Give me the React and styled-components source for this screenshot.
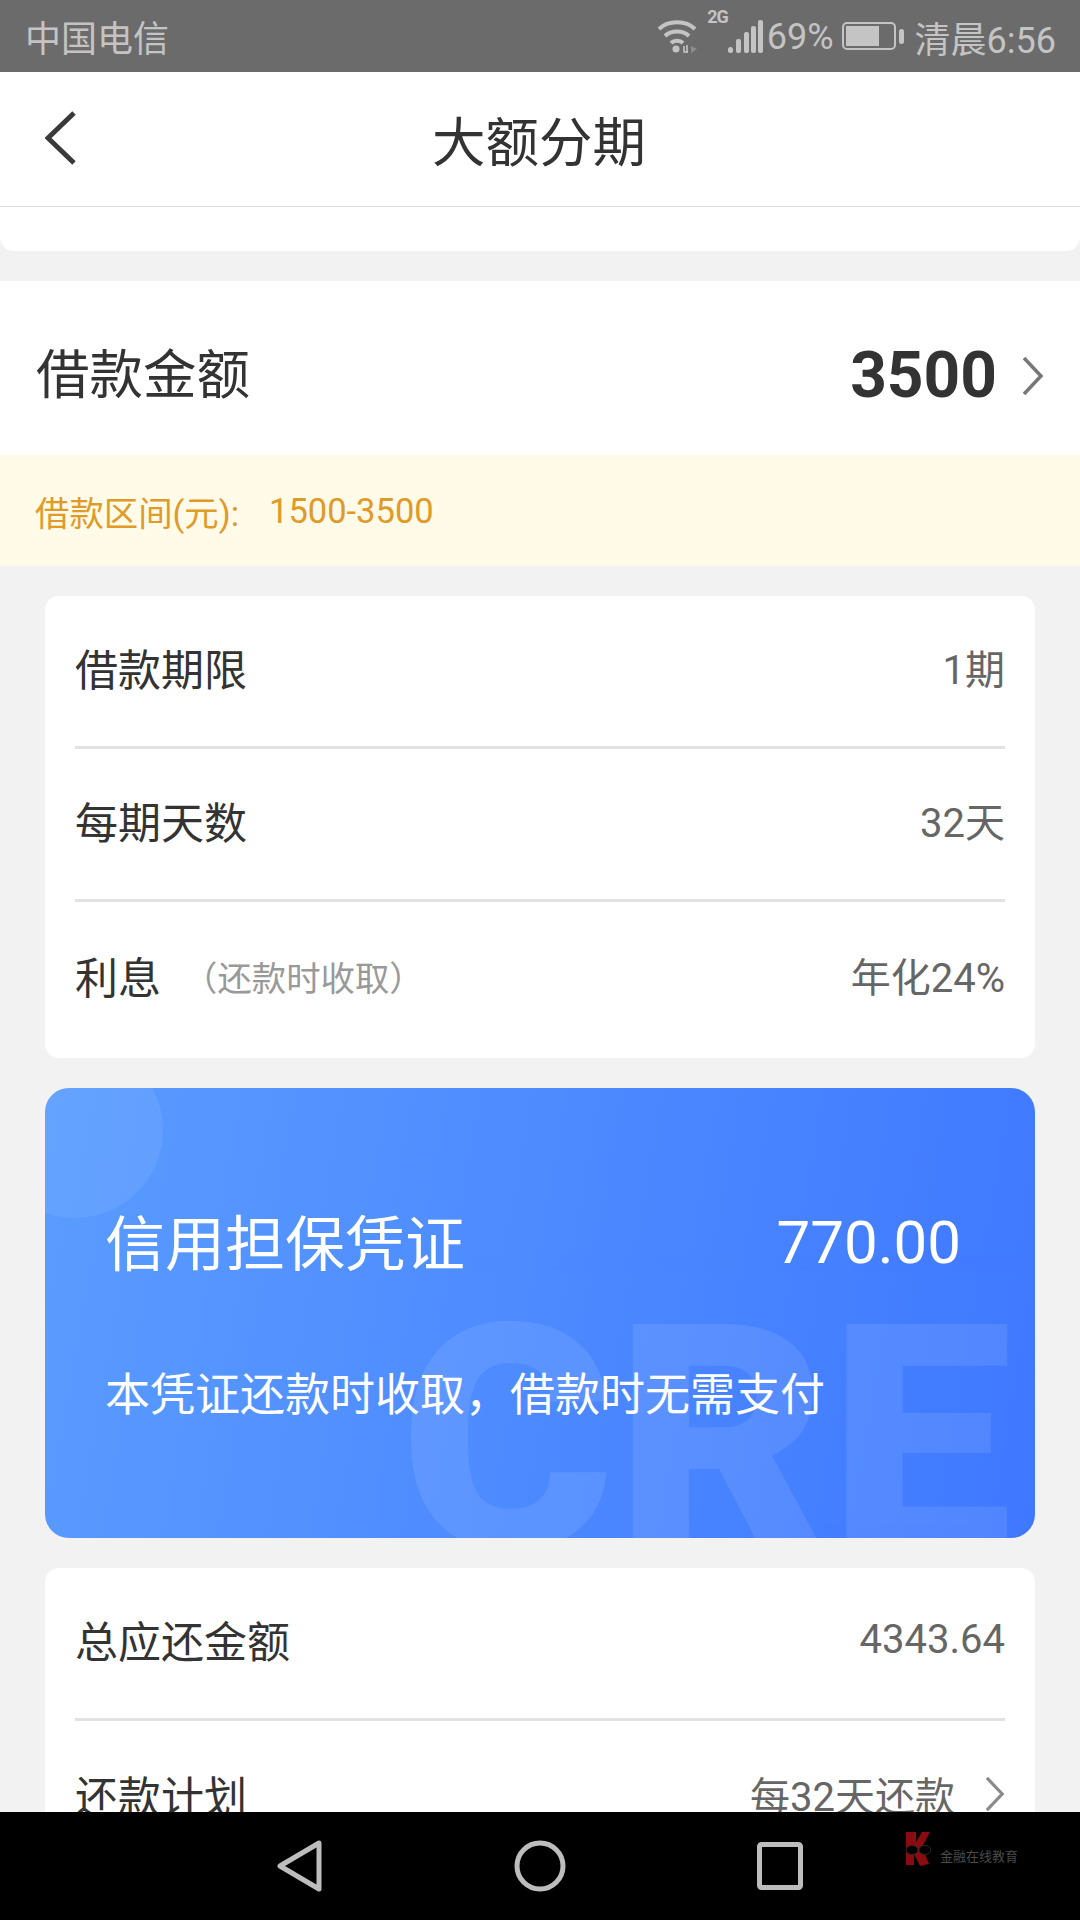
import React from "react";
import styled, { createGlobalStyle } from "styled-components";

const GlobalStyle = createGlobalStyle`
  html, body {
    margin: 0;
    padding: 0;
    background: #f2f2f2;
  }
  body {
    font-family: Roboto, "Noto Sans CJK SC", sans-serif;
  }
`;

const App = () => {
  return (
    <Page>
      <GlobalStyle />
      <StatusBar>
        <Carrier>中国电信</Carrier>
        <StatusRight>
          <WifiIcon />
          <NetType>2G</NetType>
          <SignalIcon />
          <StatusText>69%</StatusText>
          <BatteryIcon />
          <StatusText>清晨6:56</StatusText>
        </StatusRight>
      </StatusBar>

      <NavBar>
        <BackButton>
          <svg width="31" height="54" viewBox="0 0 31 54" fill="none">
            <path d="M29 2 L3 27 L29 52" stroke="#3a3a3a" strokeWidth="5" />
          </svg>
        </BackButton>
        <NavTitle>大额分期</NavTitle>
      </NavBar>

      <Content>
        <TopStrip />

        <AmountRow>
          <AmountLabel>借款金额</AmountLabel>
          <AmountRight>
            <AmountValue>3500</AmountValue>
            <Chevron size={40} />
          </AmountRight>
        </AmountRow>
        <RangeBar>
          <span>借款区间(元):</span>
          <RangeValue>1500-3500</RangeValue>
        </RangeBar>

        <Card>
          <Row>
            <RowLabel>借款期限</RowLabel>
            <RowValue>1期</RowValue>
          </Row>
          <Row>
            <RowLabel>每期天数</RowLabel>
            <RowValue>32天</RowValue>
          </Row>
          <Row>
            <RowLabel>
              利息<RowHint>（还款时收取）</RowHint>
            </RowLabel>
            <RowValue>年化24%</RowValue>
          </Row>
        </Card>

        <CreditCard>
          <Bubble />
          <Watermark>CRE</Watermark>
          <CreditTop>
            <CreditTitle>信用担保凭证</CreditTitle>
            <CreditAmount>770.00</CreditAmount>
          </CreditTop>
          <CreditNote>本凭证还款时收取，借款时无需支付</CreditNote>
        </CreditCard>

        <Card>
          <Row>
            <RowLabel>总应还金额</RowLabel>
            <RowValue>4343.64</RowValue>
          </Row>
          <Row>
            <RowLabel>还款计划</RowLabel>
            <RowValue>
              每32天还款
              <Chevron size={36} color="#8a8a8a" />
            </RowValue>
          </Row>
        </Card>
      </Content>

      <BottomNav>
        <svg width="46" height="52" viewBox="0 0 46 52" fill="none">
          <path d="M42 3 L42 49 L3 26 Z" stroke="#bdbdbd" strokeWidth="5" strokeLinejoin="round" />
        </svg>
        <svg width="52" height="52" viewBox="0 0 52 52" fill="none">
          <circle cx="26" cy="26" r="23" stroke="#bdbdbd" strokeWidth="5" />
        </svg>
        <svg width="46" height="48" viewBox="0 0 46 48" fill="none">
          <rect x="2.5" y="2.5" width="41" height="43" rx="2" stroke="#bdbdbd" strokeWidth="5" />
        </svg>
        <Logo>
          <svg width="26" height="34" viewBox="0 0 26 34">
            <path d="M1 0 H11 V10 L17 0 H25 L17 15 L24 32 L15 34 L9 22 L9 33 H1 Z" fill="#8a0c10" />
            <ellipse cx="7" cy="18" rx="6" ry="4.5" fill="#000" stroke="#2a2a2a" />
            <ellipse cx="20" cy="18" rx="6" ry="4.5" fill="#000" stroke="#2a2a2a" />
          </svg>
          <LogoText>金融在线教育</LogoText>
        </Logo>
      </BottomNav>
    </Page>
  );
};

export default App;

const WifiIcon = () => (
  <svg width="42" height="36" viewBox="0 0 42 36" fill="none">
    <path d="M2 11 C11 2 29 2 38 11" stroke="#c4c4c4" strokeWidth="4" />
    <path d="M8 18 C14 12 26 12 32 18" stroke="#c4c4c4" strokeWidth="4" />
    <path d="M14 25 C17 22 23 22 26 25" stroke="#c4c4c4" strokeWidth="4" />
    <circle cx="19" cy="31" r="3.5" fill="#c4c4c4" />
    <path d="M27 28 V34 H31 M30 27 V35" stroke="#c4c4c4" strokeWidth="1.6" />
    <path d="M34 28 L40 31 L34 35 Z" fill="#8e8e8e" />
  </svg>
);

const SignalIcon = () => (
  <svg width="35" height="35" viewBox="0 0 35 35">
    <rect x="0" y="28" width="5" height="6" rx="2.5" fill="#c4c4c4" />
    <rect x="8" y="20" width="5" height="14" rx="2" fill="#c4c4c4" />
    <rect x="16" y="13" width="5" height="21" rx="2" fill="#c4c4c4" />
    <rect x="23" y="7" width="5" height="27" rx="2" fill="#c4c4c4" />
    <rect x="30" y="1" width="5" height="33" rx="2" fill="#c4c4c4" />
  </svg>
);

const BatteryIcon = () => (
  <svg width="62" height="30" viewBox="0 0 62 30" fill="none">
    <rect x="1" y="2" width="52" height="26" rx="4" stroke="#c4c4c4" strokeWidth="2" />
    <rect x="4" y="5" width="33" height="20" fill="#c4c4c4" />
    <rect x="57" y="8" width="5" height="15" rx="2.5" fill="#c4c4c4" />
  </svg>
);

const Chevron = ({ size, color = "#777" }) => (
  <svg width={size / 2 + 2} height={size} viewBox="0 0 22 40" fill="none">
    <path d="M2 2 L19 20 L2 38" stroke={color} strokeWidth="3.5" />
  </svg>
);

const Page = styled.div`
  width: 1080px;
  height: 1920px;
  display: flex;
  flex-direction: column;
  overflow: hidden;
  background: #f2f2f2;
`;

const StatusBar = styled.div`
  height: 72px;
  flex: none;
  display: flex;
  align-items: center;
  justify-content: space-between;
  padding: 0 24px 0 25px;
  background: #6b6b6b;
  color: #c4c4c4;
`;

const Carrier = styled.span`
  font-size: 36px;
`;

const StatusRight = styled.div`
  display: flex;
  align-items: center;
`;

const NetType = styled.span`
  font-size: 18px;
  font-weight: 700;
  letter-spacing: -1px;
  align-self: flex-start;
  margin: -3px 0 0 8px;
`;

const StatusText = styled.span`
  font-size: 36px;
  margin: 2px 8px 0 4px;
  &:last-child {
    margin: 2px 0 0 11px;
  }
`;

const NavBar = styled.div`
  height: 134px;
  flex: none;
  position: relative;
  display: flex;
  align-items: center;
  justify-content: center;
  background: #fff;
  border-bottom: 1px solid #dcdcdc;
`;

const BackButton = styled.div`
  position: absolute;
  left: 45px;
  top: 39px;
  line-height: 0;
`;

const NavTitle = styled.h1`
  margin: 0 2px 2px 0;
  font-size: 53.5px;
  font-weight: 400;
  color: #333;
`;

const Content = styled.div`
  flex: 1;
  min-height: 0;
  overflow: hidden;
`;

const TopStrip = styled.div`
  height: 44px;
  background: #fff;
  border-radius: 0 0 14px 14px;
  margin-bottom: 30px;
`;

const AmountRow = styled.div`
  height: 174px;
  display: flex;
  align-items: center;
  justify-content: space-between;
  padding: 5px 36px 0;
  box-sizing: border-box;
  background: #fff;
`;

const AmountLabel = styled.span`
  font-size: 53.5px;
  color: #333;
`;

const AmountRight = styled.div`
  display: flex;
  align-items: center;
  gap: 25px;
  margin-top: 10px;
`;

const AmountValue = styled.span`
  font-size: 64px;
  font-weight: 700;
  color: #333;
`;

const RangeBar = styled.div`
  height: 111px;
  display: flex;
  align-items: center;
  gap: 30px;
  padding: 0 35px;
  background: #fffbe8;
  color: #e09a28;
  font-size: 34.4px;
  margin-bottom: 30px;
`;

const RangeValue = styled.span`
  font-size: 34.5px;
`;

const Card = styled.div`
  margin: 0 45px 30px;
  padding: 0 30px;
  background: #fff;
  border-radius: 14px;
`;

const Row = styled.div`
  height: 153px;
  display: flex;
  align-items: center;
  justify-content: space-between;
  padding-bottom: 8px;
  border-bottom: 3px solid #e2e2e2;
  box-sizing: border-box;
  &:last-child {
    height: 156px;
    padding-bottom: 11px;
    border-bottom: 0;
  }
`;

const RowLabel = styled.div`
  display: flex;
  align-items: center;
  font-size: 43px;
  color: #333;
`;

const RowHint = styled.span`
  font-size: 34.4px;
  color: #999;
  margin: 3px 0 0 22px;
`;

const RowValue = styled.div`
  display: flex;
  align-items: center;
  gap: 30px;
  font-size: 40px;
  color: #666;
`;

const CreditCard = styled.div`
  position: relative;
  height: 450px;
  margin: 0 45px 30px;
  padding: 0 74px 0 60px;
  box-sizing: border-box;
  overflow: hidden;
  border-radius: 24px;
  color: #fff;
  background: linear-gradient(100deg, #5a9cff 0%, #3f78ff 100%);
`;

const Bubble = styled.div`
  position: absolute;
  left: -58px;
  top: -46px;
  width: 176px;
  height: 176px;
  border-radius: 50%;
  background: rgba(255, 255, 255, 0.07);
`;

const Watermark = styled.div`
  position: absolute;
  left: 355px;
  top: 195px;
  font-family: Roboto, sans-serif;
  font-size: 315px;
  font-weight: 900;
  line-height: 1;
  color: #fff;
  opacity: 0.09;
  transform: scaleX(1.04);
  transform-origin: left top;
`;

const CreditTop = styled.div`
  position: relative;
  display: flex;
  align-items: center;
  justify-content: space-between;
  padding-top: 108px;
`;

const CreditTitle = styled.span`
  font-size: 60px;
`;

const CreditAmount = styled.span`
  font-size: 60px;
  margin-top: 5px;
`;

const CreditNote = styled.div`
  position: relative;
  margin-top: 76px;
  font-size: 45px;
`;

const BottomNav = styled.div`
  position: relative;
  height: 108px;
  flex: none;
  display: flex;
  align-items: center;
  justify-content: center;
  gap: 191px;
  background: #000;
`;

const Logo = styled.div`
  position: absolute;
  left: 905px;
  top: 20px;
  display: flex;
  align-items: flex-end;
  gap: 9px;
`;

const LogoText = styled.span`
  font-size: 13px;
  color: #4a4a4a;
  margin-bottom: 1px;
`;
